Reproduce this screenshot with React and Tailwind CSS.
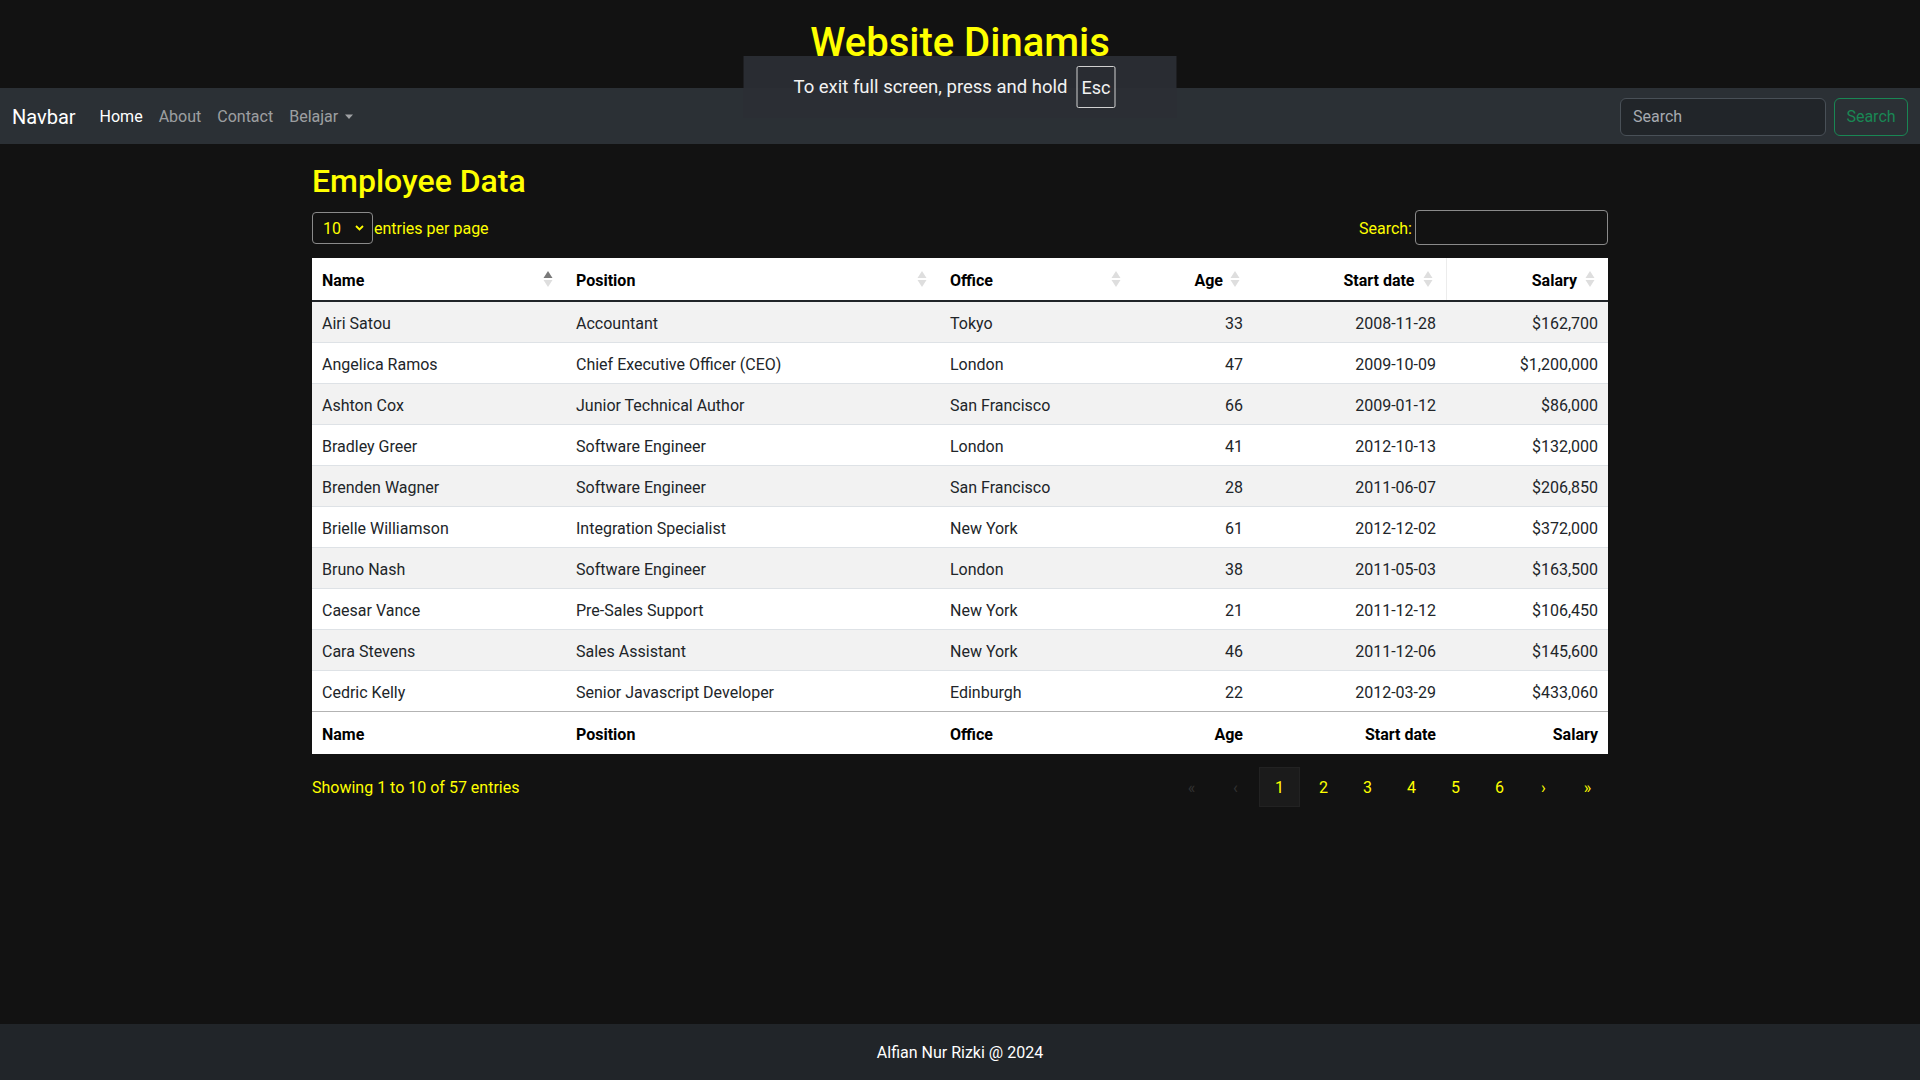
import React from "react";

const rows = [
  ["Airi Satou", "Accountant", "Tokyo", "33", "2008-11-28", "$162,700"],
  ["Angelica Ramos", "Chief Executive Officer (CEO)", "London", "47", "2009-10-09", "$1,200,000"],
  ["Ashton Cox", "Junior Technical Author", "San Francisco", "66", "2009-01-12", "$86,000"],
  ["Bradley Greer", "Software Engineer", "London", "41", "2012-10-13", "$132,000"],
  ["Brenden Wagner", "Software Engineer", "San Francisco", "28", "2011-06-07", "$206,850"],
  ["Brielle Williamson", "Integration Specialist", "New York", "61", "2012-12-02", "$372,000"],
  ["Bruno Nash", "Software Engineer", "London", "38", "2011-05-03", "$163,500"],
  ["Caesar Vance", "Pre-Sales Support", "New York", "21", "2011-12-12", "$106,450"],
  ["Cara Stevens", "Sales Assistant", "New York", "46", "2011-12-06", "$145,600"],
  ["Cedric Kelly", "Senior Javascript Developer", "Edinburgh", "22", "2012-03-29", "$433,060"],
];

function SortIcon({ active }) {
  return (
    <svg width="10" height="17" viewBox="0 0 10 17" className="absolute right-[13px] top-1/2 -translate-y-1/2">
      <polygon points="0.5,7.5 5,0.5 9.5,7.5" fill={active ? "#7a7a7a" : "#dedede"} />
      <polygon points="0.5,9.5 5,16.5 9.5,9.5" fill="#dedede" />
    </svg>
  );
}

export default function App() {
  return (
    <div className="min-h-screen flex flex-col bg-[#121212] font-['Roboto',sans-serif] text-[16px] relative">
      {/* Top header */}
      <header className="h-[88px] pt-[19px] text-center">
        <h1 className="text-[40px] leading-[48px] font-medium text-[#ffff00]">Website Dinamis</h1>
      </header>

      {/* Fullscreen notice */}
      <div className="absolute left-1/2 -translate-x-1/2 top-[56px] w-[433px] h-[62px] bg-[rgba(43,46,53,0.93)] flex items-center justify-start pl-[50px] gap-[9px] z-10">
        <span className="text-[18.5px] text-[#f2f2f2] pt-[1px]">To exit full screen, press and hold</span>
        <span className="h-[42px] px-[4px] flex items-center border border-[#d0d0d0] rounded-[2px] text-[18px] text-[#f2f2f2]">Esc</span>
      </div>

      {/* Navbar */}
      <nav className="h-[56px] bg-[#2b3035] flex items-center px-[12px] pt-[2px]">
        <span className="text-[20px] text-white mr-[16px]">Navbar</span>
        <div className="flex items-center">
          <span className="px-[8px] text-white">Home</span>
          <span className="px-[8px] text-[rgba(255,255,255,0.55)]">About</span>
          <span className="px-[8px] text-[rgba(255,255,255,0.55)]">Contact</span>
          <span className="px-[8px] text-[rgba(255,255,255,0.55)] flex items-center">
            Belajar
            <svg width="10" height="6" viewBox="0 0 10 6" className="ml-[6px]">
              <polygon points="1,0.5 9,0.5 5,5" fill="rgba(255,255,255,0.55)" />
            </svg>
          </span>
        </div>
        <div className="ml-auto flex items-center gap-[8px]">
          <div className="w-[206px] h-[38px] bg-[#212529] border border-[#495057] rounded-[6px] px-[12px] flex items-center text-[#a6aab0]">
            Search
          </div>
          <div className="h-[38px] w-[74px] border border-[#198754] rounded-[6px] flex items-center justify-center text-[#198754]">
            Search
          </div>
        </div>
      </nav>

      {/* Main */}
      <main className="flex-1">
        <div className="w-[1296px] mx-auto">
          <h2 className="mt-[18px] text-[32px] leading-[38px] font-medium text-[#ffff00]">Employee Data</h2>

          <div className="mt-[10px] h-[35px] flex items-center justify-between text-[#ffff00]">
            <div className="flex items-center">
              <div className="w-[61px] h-[32px] border border-[#8a8a8a] rounded-[4px] flex items-center justify-between pl-[10px] pr-[8px]">
                <span className="pt-[2px]">10</span>
                <svg width="9" height="6" viewBox="0 0 9 6">
                  <polyline points="1,1 4.5,4.5 8,1" fill="none" stroke="#ffff00" strokeWidth="1.8" />
                </svg>
              </div>
              <span className="ml-[1px] pt-[3px]">entries per page</span>
            </div>
            <div className="flex items-center">
              <span className="pt-[2px]">Search:</span>
              <div className="ml-[3px] w-[193px] h-[35px] border border-[#8a8a8a] rounded-[4px]"></div>
            </div>
          </div>

          <table className="mt-[13px] w-[1296px] table-fixed bg-white text-[#212529]">
            <colgroup>
              <col className="w-[254px]" />
              <col className="w-[374px]" />
              <col className="w-[194px]" />
              <col className="w-[119px]" />
              <col className="w-[193px]" />
              <col className="w-[162px]" />
            </colgroup>
            <thead>
              <tr className="border-b-2 border-[#212529]">
                <th className="relative text-left font-bold text-black pt-[11px] pb-[7px] pl-[10px] leading-[24px]">Name<SortIcon active /></th>
                <th className="relative text-left font-bold text-black pt-[11px] pb-[7px] pl-[10px] leading-[24px]">Position<SortIcon /></th>
                <th className="relative text-left font-bold text-black pt-[11px] pb-[7px] pl-[10px] leading-[24px]">Office<SortIcon /></th>
                <th className="relative text-right font-bold text-black pt-[11px] pb-[7px] pr-[30px] leading-[24px]">Age<SortIcon /></th>
                <th className="relative text-right font-bold text-black pt-[11px] pb-[7px] pr-[31px] leading-[24px]">Start date<SortIcon /></th>
                <th className="relative text-right font-bold text-black pt-[11px] pb-[7px] pr-[31px] leading-[24px] border-l border-[#ececec]">Salary<SortIcon /></th>
              </tr>
            </thead>
            <tbody>
              {rows.map((r, i) => (
                <tr key={i} className={(i % 2 === 0 ? "bg-[#f2f2f2] " : "bg-white ") + (i < rows.length - 1 ? "border-b border-[#dee2e6]" : "")}>
                  <td className="pt-[10px] pb-[6px] px-[10px] leading-[24px]">{r[0]}</td>
                  <td className="pt-[10px] pb-[6px] px-[10px] leading-[24px]">{r[1]}</td>
                  <td className="pt-[10px] pb-[6px] px-[10px] leading-[24px]">{r[2]}</td>
                  <td className="pt-[10px] pb-[6px] px-[10px] leading-[24px] text-right">{r[3]}</td>
                  <td className="pt-[10px] pb-[6px] px-[10px] leading-[24px] text-right">{r[4]}</td>
                  <td className="pt-[10px] pb-[6px] px-[10px] leading-[24px] text-right">{r[5]}</td>
                </tr>
              ))}
            </tbody>
            <tfoot>
              <tr className="border-t border-[#b3b3b3]">
                <th className="text-left font-bold text-black pt-[11px] pb-[7px] px-[10px] leading-[24px]">Name</th>
                <th className="text-left font-bold text-black pt-[11px] pb-[7px] px-[10px] leading-[24px]">Position</th>
                <th className="text-left font-bold text-black pt-[11px] pb-[7px] px-[10px] leading-[24px]">Office</th>
                <th className="text-right font-bold text-black pt-[11px] pb-[7px] px-[10px] leading-[24px]">Age</th>
                <th className="text-right font-bold text-black pt-[11px] pb-[7px] px-[10px] leading-[24px]">Start date</th>
                <th className="text-right font-bold text-black pt-[11px] pb-[7px] px-[10px] leading-[24px]">Salary</th>
              </tr>
            </tfoot>
          </table>

          <div className="mt-[13px] h-[40px] flex items-center justify-between text-[#ffff00]">
            <span className="pt-[2px]">Showing 1 to 10 of 57 entries</span>
            <div className="flex items-center gap-[3px]">
              <span className="w-[41px] h-[40px] pt-[2px] flex items-center justify-center text-[#333333]">«</span>
              <span className="w-[41px] h-[40px] pt-[2px] flex items-center justify-center text-[#333333]">‹</span>
              <span className="w-[41px] h-[40px] pt-[2px] flex items-center justify-center bg-[#1b1b1b] border border-[#222222]">1</span>
              <span className="w-[41px] h-[40px] pt-[2px] flex items-center justify-center">2</span>
              <span className="w-[41px] h-[40px] pt-[2px] flex items-center justify-center">3</span>
              <span className="w-[41px] h-[40px] pt-[2px] flex items-center justify-center">4</span>
              <span className="w-[41px] h-[40px] pt-[2px] flex items-center justify-center">5</span>
              <span className="w-[41px] h-[40px] pt-[2px] flex items-center justify-center">6</span>
              <span className="w-[41px] h-[40px] pt-[2px] flex items-center justify-center">›</span>
              <span className="w-[41px] h-[40px] pt-[2px] flex items-center justify-center">»</span>
            </div>
          </div>
        </div>
      </main>

      {/* Footer */}
      <footer className="h-[56px] pt-[2px] bg-[#212529] flex items-center justify-center text-white">
        Alfian Nur Rizki @ 2024
      </footer>
    </div>
  );
}
